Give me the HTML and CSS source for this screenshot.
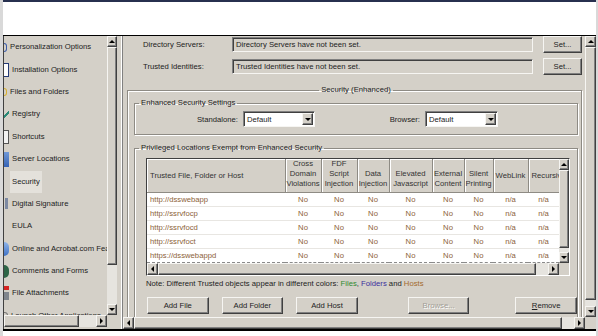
FILE: index.html
```html
<!DOCTYPE html>
<html lang="en">
<head>
  <meta charset="UTF-8">
  <meta name="viewport" content="width=device-width, initial-scale=1.0">
  <title>Security (Enhanced)</title>
  <link rel="stylesheet" href="styles.css">
</head>
<body>
  <div class="screen">
    <div class="top-band"></div>

    <div class="window">
      <aside class="sidebar">
        <ul class="nav">
          <li class="nav-item"><span class="nav-icon icon-person"></span><span class="nav-text">Personalization Options</span></li>
          <li class="nav-item"><span class="nav-icon icon-install"></span><span class="nav-text">Installation Options</span></li>
          <li class="nav-item"><span class="nav-icon icon-folder"></span><span class="nav-text">Files and Folders</span></li>
          <li class="nav-item"><span class="nav-icon icon-registry"></span><span class="nav-text">Registry</span></li>
          <li class="nav-item"><span class="nav-icon icon-shortcut"></span><span class="nav-text">Shortcuts</span></li>
          <li class="nav-item"><span class="nav-icon icon-server"></span><span class="nav-text">Server Locations</span></li>
          <li class="nav-item active"><span class="nav-icon"></span><span class="nav-text">Security</span></li>
          <li class="nav-item"><span class="nav-icon icon-signature"></span><span class="nav-text">Digital Signature</span></li>
          <li class="nav-item"><span class="nav-icon"></span><span class="nav-text">EULA</span></li>
          <li class="nav-item"><span class="nav-icon icon-online"></span><span class="nav-text">Online and Acrobat.com Features</span></li>
          <li class="nav-item"><span class="nav-icon icon-comments"></span><span class="nav-text">Comments and Forms</span></li>
          <li class="nav-item"><span class="nav-icon icon-attach"></span><span class="nav-text">File Attachments</span></li>
          <li class="nav-item"><span class="nav-icon icon-launch"></span><span class="nav-text">Launch Other Applications</span></li>
        </ul>
        <div class="vscroll side-v">
          <span class="sb-btn up"></span>
          <span class="sb-thumb"></span>
          <span class="sb-track"></span>
          <span class="sb-btn down"></span>
        </div>
        <div class="hscroll side-h">
          <span class="sb-thumb"></span>
          <span class="sb-track"></span>
          <span class="sb-btn right"></span>
        </div>
        <div class="sb-corner"></div>
      </aside>

      <div class="split"></div>

      <section class="main">
        <div class="content">
          <div class="fields">
            <span class="field-label">Directory Servers:</span>
            <span class="textbox">Directory Servers have not been set.</span>
            <button class="btn btn-set">Set...</button>
            <span class="field-label">Trusted Identities:</span>
            <span class="textbox">Trusted Identities have not been set.</span>
            <button class="btn btn-set">Set...</button>
          </div>

          <fieldset class="group group-outer">
            <legend class="legend-center">Security (Enhanced)</legend>

            <fieldset class="group group-settings">
              <legend>Enhanced Security Settings</legend>
              <div class="combo-row">
                <span class="combo-label first">Standalone:</span>
                <div class="combo combo-standalone">
                  <span class="combo-value">Default</span>
                  <span class="combo-btn"></span>
                </div>
                <span class="combo-label second">Browser:</span>
                <div class="combo combo-browser">
                  <span class="combo-value">Default</span>
                  <span class="combo-btn"></span>
                </div>
              </div>
            </fieldset>

            <fieldset class="group group-locations">
              <legend>Privileged Locations Exempt from Enhanced Security</legend>

              <div class="grid-frame">
                <div class="grid-body">
                  <table class="locations">
                    <colgroup>
                      <col style="width:138px">
                      <col style="width:36px">
                      <col style="width:36px">
                      <col style="width:32px">
                      <col style="width:43px">
                      <col style="width:32px">
                      <col style="width:29px">
                      <col style="width:35px">
                      <col style="width:31px">
                    </colgroup>
                    <thead>
                      <tr>
                        <th class="host mid">Trusted File, Folder or Host</th>
                        <th>Cross<br>Domain<br>Violations</th>
                        <th>FDF<br>Script<br>Injection</th>
                        <th>Data<br>Injection</th>
                        <th>Elevated<br>Javascript</th>
                        <th>External<br>Content</th>
                        <th>Silent<br>Printing</th>
                        <th class="mid">WebLink</th>
                        <th class="mid clip">Recursive</th>
                      </tr>
                    </thead>
                    <tbody>
                      <tr><td class="host">http://dsswebapp</td><td>No</td><td>No</td><td>No</td><td>No</td><td>No</td><td>No</td><td>n/a</td><td>n/a</td></tr>
                      <tr><td class="host">http://ssrvfocp</td><td>No</td><td>No</td><td>No</td><td>No</td><td>No</td><td>No</td><td>n/a</td><td>n/a</td></tr>
                      <tr><td class="host">http://ssrvfocd</td><td>No</td><td>No</td><td>No</td><td>No</td><td>No</td><td>No</td><td>n/a</td><td>n/a</td></tr>
                      <tr><td class="host">http://ssrvfoct</td><td>No</td><td>No</td><td>No</td><td>No</td><td>No</td><td>No</td><td>n/a</td><td>n/a</td></tr>
                      <tr><td class="host">https://dsswebappd</td><td>No</td><td>No</td><td>No</td><td>No</td><td>No</td><td>No</td><td>n/a</td><td>n/a</td></tr>
                    </tbody>
                  </table>
                </div>
                <div class="vscroll grid-v">
                  <span class="sb-btn up"></span>
                  <span class="sb-thumb"></span>
                  <span class="sb-track"></span>
                  <span class="sb-btn down"></span>
                </div>
                <div class="hscroll grid-h">
                  <span class="sb-btn left"></span>
                  <span class="sb-thumb"></span>
                  <span class="sb-track"></span>
                  <span class="sb-btn right"></span>
                </div>
                <div class="sb-corner"></div>
              </div>

              <p class="note">Note: Different Trusted objects appear in different colors: <span class="c-files">Files</span>, <span class="c-folders">Folders</span> and <span class="c-hosts">Hosts</span></p>

              <div class="btn-row">
                <button class="btn">Add File</button>
                <button class="btn">Add Folder</button>
                <button class="btn">Add Host</button>
                <button class="btn btn-browse" disabled>Browse...</button>
                <button class="btn btn-remove"><u>R</u>emove</button>
              </div>
            </fieldset>
          </fieldset>
        </div>

        <div class="vscroll main-v">
          <span class="sb-btn up"></span>
          <span class="sb-thumb"></span>
          <span class="sb-track"></span>
          <span class="sb-btn down"></span>
        </div>
        <div class="hscroll main-h">
          <span class="sb-btn left"></span>
          <span class="sb-thumb"></span>
          <span class="sb-track"></span>
          <span class="sb-btn right"></span>
        </div>
        <div class="sb-corner"></div>
      </section>
    </div>
  </div>
</body>
</html>
```

FILE: styles.css
```css
:root {
  --face: #d4d0c8;
  --shadow: #808080;
  --dark: #404040;
  --light: #f6f5f2;
  --track: #e6e4df;
  --text: #222;
  --entry: #8c6239;
}

* {
  box-sizing: border-box;
  margin: 0;
  padding: 0;
}

body {
  width: 598px;
  height: 336px;
  overflow: hidden;
  font-family: "Liberation Sans", Arial, sans-serif;
  font-size: 7.7px;
  color: var(--text);
  background: #fff;
}

.screen {
  height: 336px;
  border-left: 3px solid #d9d9d9;
  border-right: 2px solid #d9d9d9;
}

.top-band {
  height: 35px;
  border-top: 2px solid #27304f;
  background: #fff;
}

.window {
  display: flex;
  height: 296px;
  border-top: 1px solid #000;
  border-bottom: 2px solid #000;
  background: var(--face);
}

/* raised / sunken 3d edges */
.sb-btn,
.sb-thumb,
.combo-btn,
.btn {
  background: var(--face);
  border: 1px solid;
  border-color: var(--light) var(--dark) var(--dark) var(--light);
  box-shadow: inset -1px -1px 0 var(--shadow);
}

.textbox,
.combo {
  border: 1px solid;
  border-color: var(--shadow) var(--light) var(--light) var(--shadow);
  box-shadow: inset 1px 1px 0 var(--dark);
}

/* sidebar */
.sidebar {
  width: 114px;
  border-left: 1px solid var(--dark);
  display: grid;
  grid-template-columns: 103px 10px;
  grid-template-rows: 279px 12px;
}

.nav {
  list-style: none;
  overflow: hidden;
  white-space: nowrap;
}

.nav-item {
  height: 22.4px;
  display: flex;
  align-items: center;
}

.nav-icon {
  flex: none;
  width: 5px;
  height: 12px;
  margin-right: 3px;
}

.nav-text {
  line-height: 22px;
  padding: 0 2px;
  margin-left: -2px;
}

.nav-item.active .nav-text {
  background: #e4e1db;
}

.icon-person {
  border: 1.5px solid #3b5cab;
  border-left: none;
  border-radius: 0 6px 6px 0;
  width: 3px;
  height: 9px;
}

.icon-install {
  height: 14px;
  background: #fff;
  border: 1px solid #243a78;
  border-left: none;
}

.icon-folder {
  width: 3px;
  height: 8px;
  border: 1.5px solid #d8b032;
  border-left: none;
  border-radius: 0 5px 5px 0;
}

.icon-registry {
  height: 10px;
  background: linear-gradient(135deg, transparent 45%, #2a8a78 45%, #2a8a78 60%, transparent 60%);
}

.icon-shortcut {
  height: 14px;
  border: 1px solid #555;
  border-left: none;
  background: #f2f2f2;
}

.icon-server {
  height: 15px;
  background: linear-gradient(#6f98d8, #3563b5);
}

.icon-signature {
  width: 3px;
  margin-left: 1px;
  margin-right: 4px;
  height: 11px;
  background: #7d8aa3;
}

.icon-online {
  height: 14px;
  border-radius: 0 5px 5px 0;
  background: linear-gradient(#8fb5ea, #3f72c6);
}

.icon-comments {
  height: 13px;
  border-radius: 0 6px 6px 0;
  background: #2e6548;
}

.icon-attach {
  height: 14px;
  background: linear-gradient(#d42323 0 4px, transparent 4px 6px, #7f858e 6px);
}

.icon-launch {
  width: 4px;
  height: 7px;
  border: 1px solid #777;
  border-left: none;
  border-radius: 0 4px 4px 0;
}

.split {
  width: 6px;
  border-left: 2px solid var(--face);
  border-right: 1px solid var(--shadow);
  box-shadow: inset -1px 0 0 #fff;
}

/* scrollbars */
.vscroll {
  display: flex;
  flex-direction: column;
  background: var(--track);
}

.hscroll {
  display: flex;
  background: var(--track);
}

.sb-corner {
  background: var(--face);
}

.sb-track {
  flex: 1;
}

.vscroll .sb-btn {
  flex: none;
  height: 11px;
}

.hscroll .sb-btn {
  flex: none;
  width: 11px;
}

.sb-btn,
.combo-btn {
  display: flex;
  align-items: center;
  justify-content: center;
}

.sb-btn::after,
.combo-btn::after {
  content: "";
  border: 3px solid transparent;
}

.up::after {
  border-top-width: 0;
  border-bottom-color: #000;
}

.down::after,
.combo-btn::after {
  border-bottom-width: 0;
  border-top-color: #000;
}

.left::after {
  border-left-width: 0;
  border-right-color: #000;
}

.right::after {
  border-right-width: 0;
  border-left-color: #000;
}

.side-v .sb-thumb {
  flex: none;
  height: 218px;
}

.side-h .sb-thumb {
  flex: none;
  width: 75px;
}

.main-v .sb-thumb,
.main-h .sb-thumb,
.grid-h .sb-thumb {
  flex: 1;
}

.main-v .sb-track {
  flex: none;
  height: 6px;
}

.main-h .sb-track,
.grid-h .sb-track {
  flex: none;
  width: 12px;
}

.grid-v .sb-thumb {
  flex: none;
  height: 78px;
}

/* main panel */
.main {
  flex: 1;
  display: grid;
  grid-template-columns: 1fr 11px;
  grid-template-rows: 281px 12px;
}

.content {
  overflow: hidden;
}

.fields {
  display: grid;
  grid-template-columns: 79px 301px 39px;
  column-gap: 10px;
  row-gap: 5px;
  align-items: center;
  padding-left: 20px;
}

.textbox {
  height: 15px;
  padding-left: 3px;
  line-height: 13px;
  white-space: nowrap;
  overflow: hidden;
}

.btn {
  height: 17px;
  width: 62px;
  font: inherit;
  color: var(--text);
  display: flex;
  align-items: center;
  justify-content: center;
}

.btn-set {
  width: 39px;
}

.btn-browse {
  margin-left: 37px;
  color: #a29e96;
  text-shadow: 1px 1px 0 #fff;
}

.btn-remove {
  margin-left: 33px;
}

/* groups */
.group {
  min-width: 0;
  border: 1px solid #8e8b84;
  box-shadow: inset 1px 1px 0 #fff, 1px 1px 0 #fff;
}

.group legend {
  font: inherit;
  line-height: 10px;
  padding: 0 2px;
  margin-left: 4px;
}

.group .legend-center {
  margin: 0 auto;
}

.group-outer {
  margin: 10px 3px 0 4px;
  padding: 3px 3px 20px 6px;
}

.group-settings {
  padding: 3px 0 7px;
}

.group-locations {
  margin-top: 8px;
  padding: 5px 0 20px;
}

.combo-row {
  display: flex;
  align-items: center;
}

.combo-label {
  width: 60px;
  text-align: right;
  margin-right: 5px;
}

.combo-label.first {
  margin-left: 43px;
}

.combo-label.second {
  margin-left: 45px;
}

.combo {
  display: flex;
  height: 16px;
  padding: 1px;
  background: #fff;
}

.combo-standalone {
  width: 72px;
}

.combo-browser {
  width: 73px;
}

.combo-value {
  flex: 1;
  padding-left: 2px;
  line-height: 13px;
}

.combo-btn {
  width: 11px;
}

/* locations grid */
.grid-frame {
  margin-left: 11px;
  width: 424px;
  display: grid;
  grid-template-columns: 412px 10px;
  grid-template-rows: 104px 12px;
  border: 1px solid;
  border-color: var(--dark) #fff #fff var(--dark);
}

.grid-body {
  background: #fff;
  overflow: hidden;
}

.locations {
  width: 412px;
  table-layout: fixed;
  border-collapse: collapse;
}

.locations th {
  height: 33px;
  padding: 0 0 3px;
  font-weight: normal;
  line-height: 10px;
  vertical-align: bottom;
  color: #333;
  background: var(--face);
  border-right: 1px solid #8e8b84;
  border-bottom: 1px solid #8e8b84;
  box-shadow: inset 1px 1px 0 #fff;
  overflow: hidden;
  white-space: nowrap;
}

.locations th.mid {
  vertical-align: middle;
  padding-bottom: 0;
}

.locations th.clip {
  text-align: left;
  padding-left: 3px;
}

.locations .host {
  text-align: left;
  padding-left: 3px;
}

.locations td {
  height: 14px;
  padding-top: 0;
  padding-bottom: 0;
  line-height: 13px;
  text-align: center;
  color: var(--entry);
  border-bottom: 1px solid #e8e6e2;
}

.locations tr:last-child td {
  border-bottom: 1px dashed #8a8a8a;
}

.note {
  margin: 3px 0 0 11px;
  line-height: 10px;
  white-space: nowrap;
}

.c-files {
  color: #2f8a2f;
}

.c-folders {
  color: #3a2e9c;
}

.c-hosts {
  color: #a36a2c;
}

.btn-row {
  display: flex;
  gap: 13px;
  margin: 8px 0 0 12px;
}
```
